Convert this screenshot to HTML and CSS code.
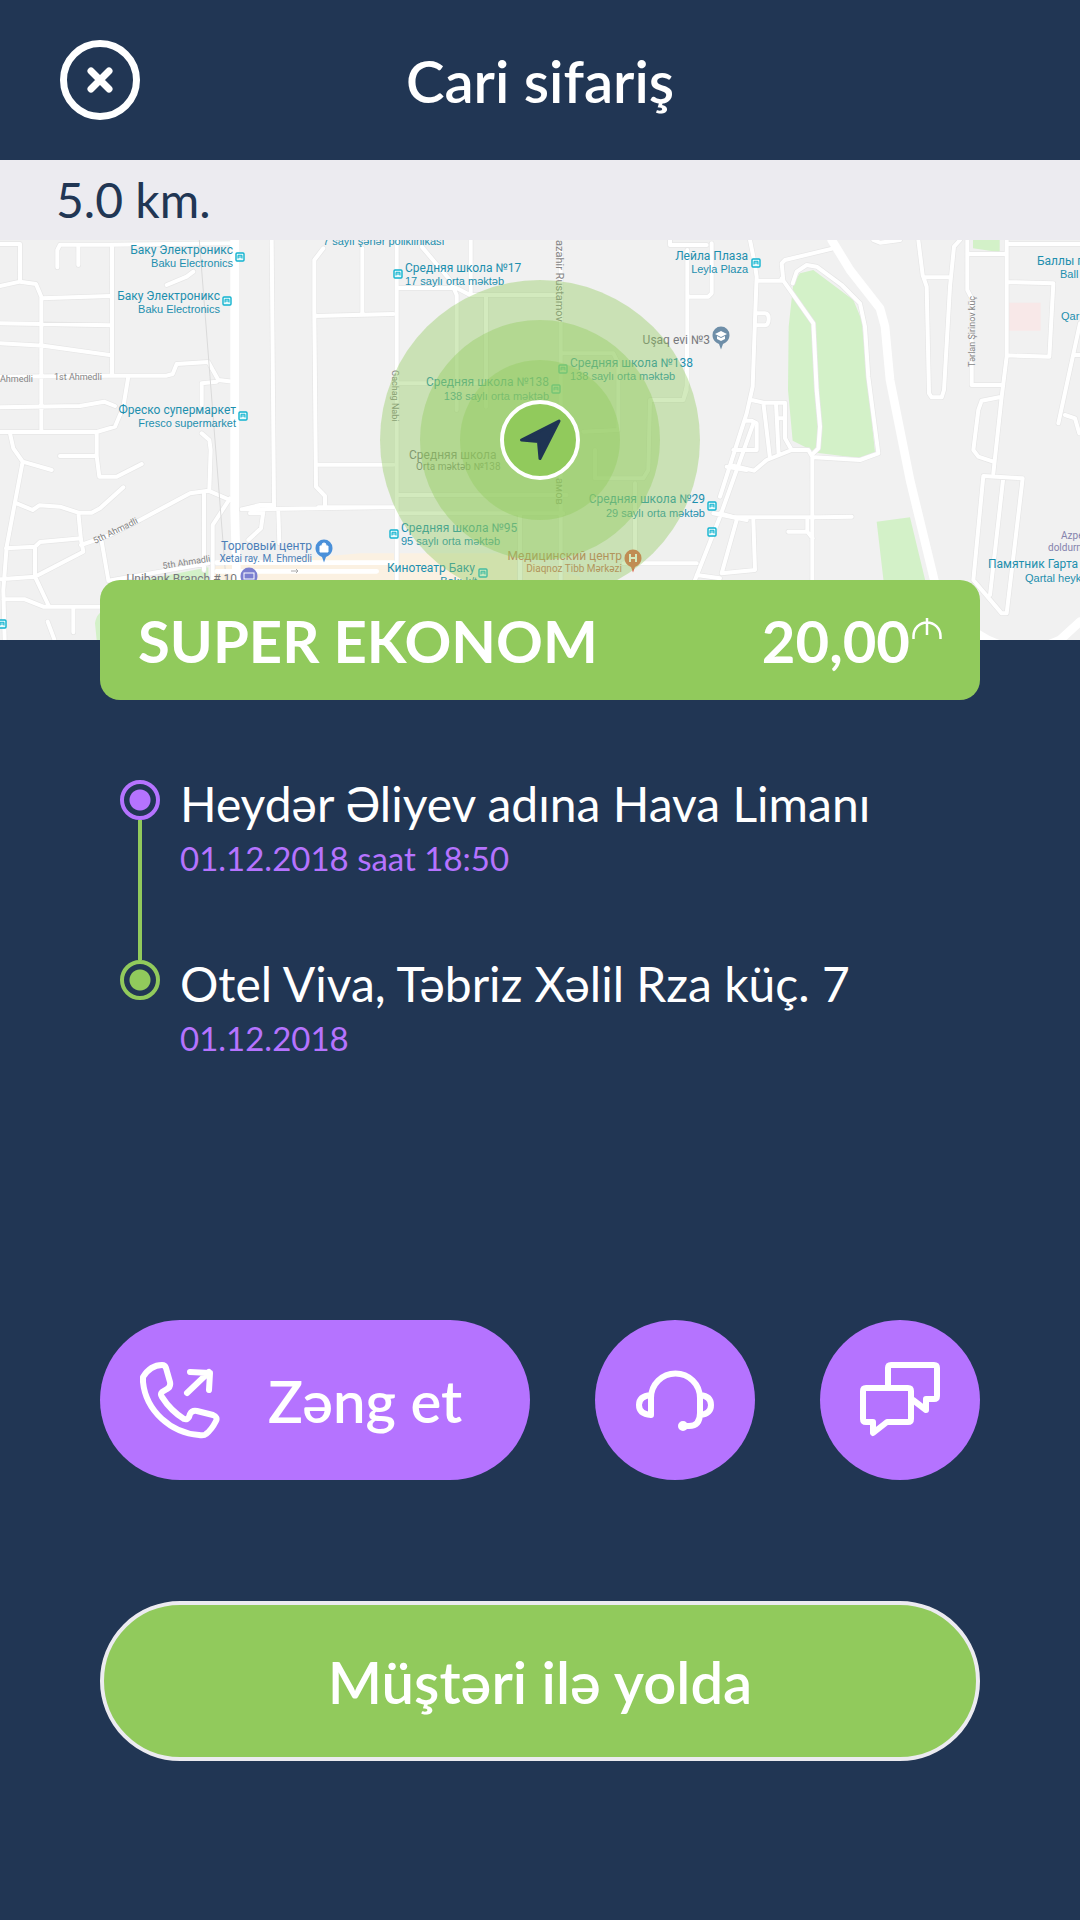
FILE: index.html
```html
<!DOCTYPE html>
<html lang="az">
<head>
    <meta charset="UTF-8">
    <meta name="viewport" content="width=device-width, initial-scale=1.0">
    <title>Cari sifariş</title>
    <link rel="stylesheet" href="styles.css">
</head>
<body>
    <header class="header">
        <button class="close-btn" type="button" aria-label="Bağla">
            <svg viewBox="0 0 80 80" fill="none" stroke="#fff" stroke-linecap="round">
                <circle cx="40" cy="40" r="36.5" stroke-width="7"/>
                <path d="M31 31l18 18M49 31l-18 18" stroke-width="7"/>
            </svg>
        </button>
        <h1>Cari sifariş</h1>
    </header>

    <main>
        <div class="distance">5.0 km.</div>

        <div class="map">
            <svg class="map-canvas" viewBox="0 0 1080 400" preserveAspectRatio="xMidYMid slice">
                <defs>
                    <symbol id="stop" viewBox="0 0 10 10">
                        <rect x="1" y="1" width="8" height="8" rx="1" fill="#e8fafc" stroke="#12b3cf" stroke-width="1.4"/>
                        <path d="M3 6.5V3.3h4v3.2M3 5h4" fill="none" stroke="#12b3cf"/>
                    </symbol>
                    <symbol id="pin" viewBox="0 0 18 24">
                        <path d="M9 23.500L7 18C3 16 .500 13.500.500 9a8.500 8.500 0 0 1 17 0c0 4.500-2.500 7-6.500 9z"/>
                    </symbol>
                </defs>

                <!-- Land, parks and roads -->
                <svg width="1080" height="400" viewBox="0 30 3240 1200">
                    <rect y="30" width="3240" height="1200" fill="#f1f1f1"/>
                    <path class="avenue" d="M630 1010L1080 970H1500L1740 1040V1080H630z"/>
                    <path class="park" d="M2380 160L2400 130 2440 120 2560 210 2585 270 2600 420 2625 668 2575 684 2450 668 2378 632 2364 480 2366 290zM2630 875L2730 862 2785 1090H2655zM2919 30H2999V67L2919 55zM400 1055L480 1040 625 1012V1060H400zM285 1180Q290 1140 330 1140V1230H290z"/>
                    <path class="clinic" d="M3025 218H3122V302H3025z"/>
                    <g class="road-edge">
                        <path id="roads" d="M0 42H60V155L0 168M60 155L108 162 124 200V605M172 112V60L180 44H330L700 40M235 44V105M336 44V437M124 205L330 198M0 280L330 286M0 340L130 347 334 376M0 440L330 437H500L518 432 530 402 625 396 655 450 700 455M605 525V460L650 455M385 440L370 530 345 590 290 606H0M0 532L240 528 312 515 345 528M30 610L40 655 68 695 155 720M68 695L50 790 20 950 10 1080 14 1230M180 678H290V606V678L298 740H350L425 702M50 820L98 840 118 826 180 830 235 848H275L300 835 370 772M235 848L243 930 250 965 105 1040 0 1048M18 955L105 950 120 936 243 925M105 950V1040L145 1125M10 1108H75L130 1130H320M220 1130V1207M143 1175L163 1228M243 945L330 915 420 870 570 790 625 782 690 810M605 610L628 630 632 660 628 780M612 785V1020M690 805L638 885V1050M305 935L325 1050M325 1052L625 1000M500 165L560 140 580 125M815 30L822 830M725 838L780 825H822M725 838L1140 832M790 845L783 895 745 930M750 850H790M835 845L838 940M970 55L943 90V250L948 770 975 798V830M1087 55V250M943 258L1180 252M955 704H1180M955 832H1180"/>
                        <path id="roads-mid" d="M1190 30V1050M1265 50L1350 150 1370 195M1412 30V190M1190 174H1370L1410 195H1680M1370 195V540M1458 200V530M1190 460H1450M1682 60V1050M1682 370H1840L1855 400V600L1750 605M1190 795H1700M1190 850H1690M1560 850V1050M2010 30V45H2120M2135 40V190L2125 200H2065M2062 60V460L2050 510H1950L1945 720 1930 745H1785V660M2060 340V480L2050 510M1905 760V990M2260 580L2160 860 2085 1050M2180 710L2240 720M2140 850L2240 870M1870 1000H2090M2090 1035L2160 1045"/>
                        <path id="roads-east" d="M2250 30L2264 100 2270 140 2265 270 2258 470 2240 550 2160 800M2270 152H2350L2345 100 2355 90 2500 55M2345 145L2440 280 2450 480 2460 590 2455 655 2440 670M2270 250H2295Q2306 250 2306 267T2295 286H2270M2378 160L2390 125 2420 105 2450 110 2525 165 2580 220 2595 290 2605 440 2635 670 2580 690 2445 682M2255 510L2290 518H2355V625L2375 660 2300 690 2262 722 2190 705M2290 518L2310 685M2328 518L2336 675M2338 565H2355M2235 572H2255L2270 580V660H2200M2375 660H2425L2437 680V1080M2160 850L2205 862H2460L2555 860M2210 870L2165 1030 2265 1020 2260 870M2422 870V905H2365M2422 905L2438 925M2620 30L2640 38 2700 30M2755 30L2768 135 2780 170 2787 490 2795 502H2825L2832 480 2850 170 2862 50 2880 30M2770 142H2850M2902 30V180L2915 205V465H3005M2902 72H3020M3020 30V380L3005 500 2980 730M3020 42L3240 42M3020 156L3160 160 3148 380 3020 376M3005 500L2945 512 2935 540 2920 660 2935 680 2980 695M2950 738L3068 745 3020 1150H3005L2920 1050zM3010 742L2970 1095M3240 280L3175 580M3195 555L3225 565 3238 610M3220 375H3240"/>
                    </g>
                    <g class="road">
                        <use href="#roads"/>
                        <use href="#roads-mid"/>
                        <use href="#roads-east"/>
                    </g>
                    <path class="rail" d="M598 30L630 440 678 1050"/>
                    <path class="main-road" d="M704 30V840L710 1050"/>
                    <path class="main-road" d="M2495 30L2550 120 2640 235 2655 290 2670 450 2730 750 2810 1080"/>
                    <path class="main-road" d="M2930 1210Q3050 1290 3180 1230L3240 1175"/>
                    <path class="highway" d="M650 998H1180M650 1024H1130"/>
                </svg>

                <!-- Street names -->
                <g class="street">
                    <text x="0" y="142">Ahmedli</text>
                    <text x="54" y="140">1st Ahmedli</text>
                    <text transform="translate(95 304) rotate(-26)">5th Ahmadli</text>
                    <text transform="translate(163 329) rotate(-9)">5th Ahmadli</text>
                    <text transform="translate(392 130) rotate(90)">Gachag Nabi</text>
                    <text class="wide" transform="translate(556 0) rotate(90)">azahir Rustamov</text>
                    <text class="wide" transform="translate(556 238) rotate(90)">амов</text>
                    <text transform="translate(975 127) rotate(-90)">Tərlan Şirinov küç</text>
                </g>

                <!-- Places -->
                <g class="place end">
                    <text x="233" y="14">Баку Электроникс</text>
                    <text class="sub" x="233" y="27">Baku Electronics</text>
                    <text x="220" y="60">Баку Электроникс</text>
                    <text class="sub" x="220" y="73">Baku Electronics</text>
                    <text x="236" y="174">Фреско супермаркет</text>
                    <text class="sub" x="236" y="187">Fresco supermarket</text>
                    <text x="748" y="20">Лейла Плаза</text>
                    <text class="sub" x="748" y="33">Leyla Plaza</text>
                    <text x="549" y="146">Средняя школа №138</text>
                    <text class="sub" x="549" y="160">138 saylı orta məktəb</text>
                    <text x="705" y="263">Средняя школа №29</text>
                    <text class="sub" x="705" y="277">29 saylı orta məktəb</text>
                    <text x="475" y="332">Кинотеатр Баку</text>
                    <text class="sub" x="477" y="345">Bakı k/t</text>
                    <text class="shop" x="312" y="310">Торговый центр</text>
                    <text class="shop small" x="312" y="322">Xetai ray. M. Ehmedli</text>
                    <text class="medic" x="622" y="320">Медицинский центр</text>
                    <text class="medic small" x="622" y="332">Diaqnoz Tibb Mərkəzi</text>
                    <text class="grey" x="710" y="104">Uşaq evi №3</text>
                    <text class="grey" x="237" y="343">Unibank Branch # 10</text>
                </g>
                <g class="place">
                    <text class="sub" x="323" y="5">7 saylı şəhər poliklinikası</text>
                    <text x="405" y="32">Средняя школа №17</text>
                    <text class="sub" x="405" y="45">17 saylı orta məktəb</text>
                    <text x="570" y="127">Средняя школа №138</text>
                    <text class="sub" x="570" y="140">138 saylı orta məktəb</text>
                    <text x="401" y="292">Средняя школа №95</text>
                    <text class="sub" x="401" y="305">95 saylı orta məktəb</text>
                    <text class="grey" x="409" y="219">Средняя школа</text>
                    <text class="grey small" x="416" y="230">Orta məktəb №138</text>
                    <text x="1037" y="25">Баллы п</text>
                    <text class="sub" x="1060" y="38">Ball</text>
                    <text class="sub" x="1061" y="80">Qar</text>
                    <text class="fuel small" x="1061" y="299">Azpe</text>
                    <text class="fuel small" x="1048" y="311">doldurm</text>
                    <text x="988" y="328">Памятник Гарта</text>
                    <text class="sub" x="1025" y="342">Qartal heyk</text>
                </g>

                <use href="#stop" x="235" y="12" width="10" height="10"/>
                <use href="#stop" x="222" y="56" width="10" height="10"/>
                <use href="#stop" x="238" y="171" width="10" height="10"/>
                <use href="#stop" x="-3" y="379" width="10" height="10"/>
                <use href="#stop" x="393" y="29" width="10" height="10"/>
                <use href="#stop" x="751" y="18" width="10" height="10"/>
                <use href="#stop" x="558" y="124" width="10" height="10"/>
                <use href="#stop" x="551" y="144" width="10" height="10"/>
                <use href="#stop" x="707" y="261" width="10" height="10"/>
                <use href="#stop" x="707" y="287" width="10" height="10"/>
                <use href="#stop" x="389" y="289" width="10" height="10"/>
                <use href="#stop" x="478" y="328" width="10" height="10"/>

                <use href="#pin" x="315" y="299" width="18" height="24" fill="#4a90d9"/>
                <path d="M320 306h8v6h-8zM322 306v-1a2 2 0 0 1 4 0v1" fill="#fff" stroke="#fff"/>
                <use href="#pin" x="240" y="327" width="18" height="24" fill="#7b7fd0"/>
                <rect x="244" y="333" width="10" height="6" fill="none" stroke="#fff"/>
                <use href="#pin" x="712" y="86" width="18" height="24" fill="#6e8ea8"/>
                <path d="M715 94l6-3 6 3-6 3zM717 96v3l4 2 4-2v-3l-4 2z" fill="#fff"/>
                <use href="#pin" x="624" y="309" width="18" height="24" fill="#e0644f"/>
                <path d="M630 314v8M636 314v8M630 318h6" fill="none" stroke="#fff" stroke-width="2"/>
                <path d="M291 331h7l-2-2M298 331l-2 2" fill="none" stroke="#aaa"/>

                <!-- Driver position -->
                <g class="pulse">
                    <circle cx="540" cy="200" r="160"/>
                    <circle cx="540" cy="200" r="120"/>
                    <circle cx="540" cy="200" r="80"/>
                </g>
                <circle cx="540" cy="200" r="38" fill="#91ca5c" stroke="#fff" stroke-width="4"/>
                <path d="M559 181L540 218.500 538.500 201.500 521.500 200z" fill="#1f3453" stroke="#1f3453" stroke-width="3" stroke-linejoin="round"/>
            </svg>
        </div>

        <section class="order">
            <div class="fare">
                <span>SUPER EKONOM</span>
                <span class="price">20,00<svg class="manat" viewBox="0 0 30 22" fill="none" stroke="#fff" stroke-width="2.500"><path d="M1.500 21V18a13.500 13.500 0 0 1 27 0v3M15 0v17"/></svg></span>
            </div>

            <ul class="route">
                <li class="stop from">
                    <span class="dot"></span>
                    <div>
                        <p class="address">Heydər Əliyev adına Hava Limanı</p>
                        <p class="date">01.12.2018 saat 18:50</p>
                    </div>
                </li>
                <li class="stop to">
                    <span class="dot"></span>
                    <div>
                        <p class="address">Otel Viva, Təbriz Xəlil Rza küç. 7</p>
                        <p class="date">01.12.2018</p>
                    </div>
                </li>
            </ul>

            <div class="actions">
                <button class="call-btn" type="button">
                    <svg class="icon" viewBox="0 0 80 80">
                        <path d="M3 17C8 9 15 5 22 5Q25 5 26 8L30 22Q31 27 27 29L22 32Q20 34 22 37C29 48 36 54 44 59Q47 60 49 57L50 54Q52 50 57 51L73 55Q78 57 76 61C73 67 70 71 66 74Q64 76 59 75C31 73 6 51 3 22Q3 19 3 17z"/>
                        <path d="M47 33L69 12M50 12L70 13 69 30"/>
                    </svg>
                    Zəng et
                </button>
                <button class="round-btn" type="button" aria-label="Dəstək">
                    <svg class="icon" viewBox="0 0 80 80">
                        <path d="M16 55V38a24 24 0 0 1 49 0V53Q65 66 54 66H49M16 35Q4 36 4 45T16 55M65 35Q76 36 76 45T65 55"/>
                        <circle cx="48" cy="66" r="2"/>
                    </svg>
                </button>
                <button class="round-btn" type="button" aria-label="Mesaj">
                    <svg class="icon" viewBox="0 0 80 80">
                        <path d="M6 28H48Q51 28 51 31V59Q51 62 48 62H27L13 73V62H6Q3 62 3 59V31Q3 28 6 28zM28 28V8Q28 5 31 5H74Q77 5 77 8V36Q77 39 74 39H66V50L53 40"/>
                    </svg>
                </button>
            </div>

            <button class="status-btn" type="button">Müştəri ilə yolda</button>
        </section>
    </main>
</body>
</html>
```
FILE: styles.css
```css
* {
    box-sizing: border-box;
}

body {
    margin: 0;
    min-height: 100vh;
    font-family: Lato, "Open Sans", sans-serif;
    color: #fff;
    background-color: #213654;
}

button {
    padding: 0;
    border: none;
    font-family: inherit;
    color: #fff;
    background: none;
    cursor: pointer;
}

.header {
    display: grid;
    grid-template-columns: 80px 1fr 80px;
    align-items: center;
    height: 160px;
    padding: 0 60px;
}

.header h1 {
    margin: 0;
    font-size: 58px;
    font-weight: 600;
    text-align: center;
}

.close-btn {
    height: 80px;
}

.close-btn svg {
    display: block;
}

.distance {
    height: 80px;
    padding: 0 56px;
    font-size: 48px;
    line-height: 80px;
    color: #213654;
    background-color: #ecebf0;
}

/* Map */
.map {
    height: 400px;
}

.map-canvas {
    display: block;
    width: 100%;
    height: 100%;
    font-family: Roboto, sans-serif;
}

.road-edge,
.road,
.main-road,
.highway,
.rail {
    fill: none;
    stroke-linejoin: round;
    stroke-linecap: round;
}

.road-edge {
    stroke: #e6e6e6;
    stroke-width: 16;
}

.road {
    stroke: #fff;
    stroke-width: 12;
}

.main-road {
    stroke: #fff;
    stroke-width: 26;
}

.highway {
    stroke: #fff;
    stroke-width: 14;
}

.avenue {
    fill: #fbf1e2;
}

.rail {
    stroke: #dadada;
    stroke-width: 3;
}

.park {
    fill: #d3f1c8;
}

.clinic {
    fill: #f8e8e8;
}

.street {
    font-size: 9px;
    fill: #858585;
}

.street .wide {
    font-size: 11px;
}

.place {
    font-size: 12px;
    fill: #1d8fae;
}

.place.end {
    text-anchor: end;
}

.place .sub {
    font-family: "Liberation Sans", Arial, sans-serif;
    font-size: 11px;
}

.place .small {
    font-size: 10px;
}

.place .shop {
    fill: #4b7fb8;
}

.place .medic {
    fill: #c8705c;
}

.place .grey {
    fill: #77787c;
}

.place .fuel {
    fill: #8583ad;
}

.pulse {
    fill: #91ca5c;
    fill-opacity: 0.4;
}

/* Order */
.order {
    position: relative;
    margin: -60px 100px 0;
}

.fare {
    display: flex;
    align-items: center;
    justify-content: space-between;
    height: 120px;
    padding: 0 38px;
    border-radius: 20px;
    font-size: 58px;
    font-weight: bold;
    background-color: #91ca5c;
}

.price {
    display: flex;
}

.manat {
    width: 30px;
    height: 22px;
    margin-top: 12px;
    margin-left: 2px;
}

.route {
    margin: 0;
    padding: 80px 20px 0;
    list-style: none;
}

.stop {
    display: flex;
    gap: 20px;
    height: 180px;
}

.from {
    background: linear-gradient(#91ca5c, #91ca5c) 18px 40px / 4px 140px no-repeat;
}

.dot {
    flex: none;
    width: 40px;
    height: 40px;
    border: 4px solid #91ca5c;
    border-radius: 50%;
    background: radial-gradient(circle, #91ca5c 10px, #213654 11px);
}

.from .dot {
    border-color: #b573ff;
    background: radial-gradient(circle, #b573ff 10px, #213654 11px);
}

.address,
.date {
    margin: 0;
    white-space: nowrap;
}

.address {
    font-size: 48px;
    line-height: 48px;
}

.date {
    font-size: 33px;
    line-height: 60px;
    color: #b573ff;
}

.actions {
    display: flex;
    gap: 65px;
    margin-top: 180px;
}

.call-btn,
.round-btn {
    height: 160px;
    border-radius: 80px;
    background-color: #b573ff;
}

.call-btn {
    display: flex;
    flex: 1;
    align-items: center;
    gap: 48px;
    padding: 0 40px;
    font-size: 58px;
    font-weight: 600;
}

.round-btn {
    display: flex;
    align-items: center;
    justify-content: center;
    width: 160px;
}

.icon {
    width: 80px;
    height: 80px;
    fill: none;
    stroke: #fff;
    stroke-width: 6;
    stroke-linecap: round;
    stroke-linejoin: round;
}

.status-btn {
    width: 100%;
    height: 160px;
    margin-top: 121px;
    border: 4px solid #ecebf0;
    border-radius: 80px;
    font-size: 58px;
    font-weight: 600;
    background-color: #91ca5c;
}
```
